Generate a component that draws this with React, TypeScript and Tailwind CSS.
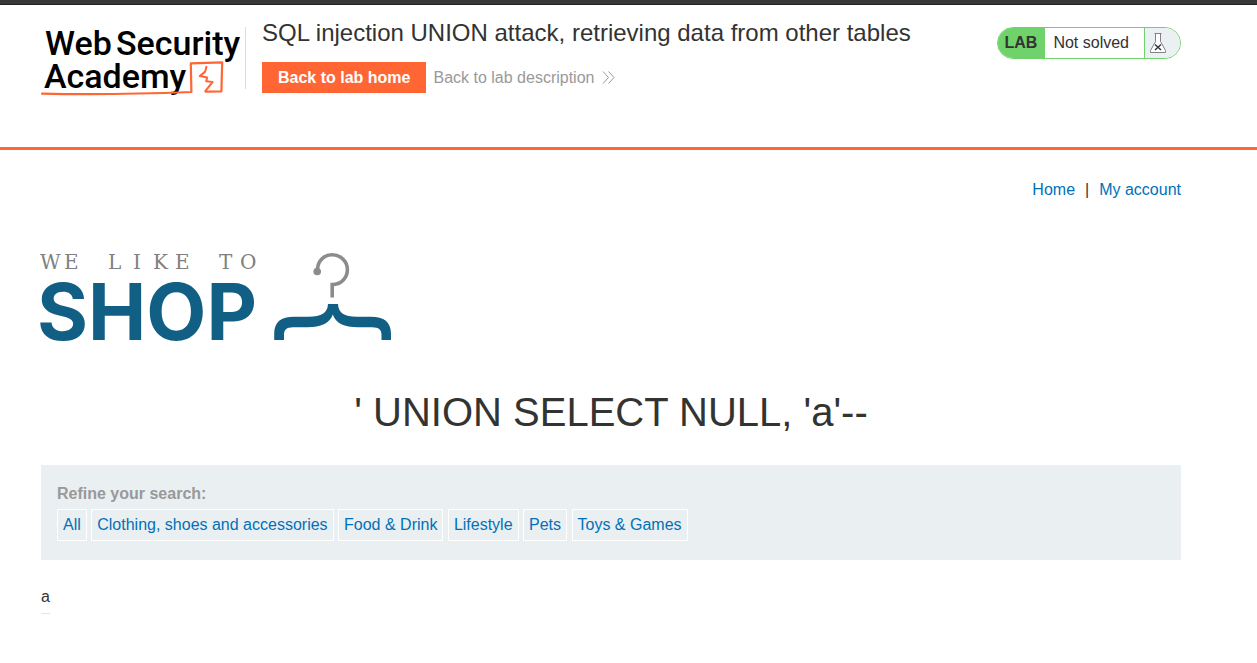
const categories = [
  'All',
  'Clothing, shoes and accessories',
  'Food & Drink',
  'Lifestyle',
  'Pets',
  'Toys & Games',
];

function AcademyLogo() {
  return (
    <svg
      width="205"
      height="80"
      viewBox="40 20 205 80"
      role="img"
      aria-label="Web Security Academy"
      className="shrink-0"
    >
      <g fill="#000" fontFamily="Roboto, sans-serif" fontSize="34" fontWeight="500">
        <text x="45" y="55">Web</text>
        <text x="116" y="55">Security</text>
        <text x="44" y="88">Academy</text>
      </g>
      <g fill="none" stroke="#ff6633" strokeLinejoin="round" strokeLinecap="round">
        <path d="M42 93.6 C90 94.8 140 94 191.4 92 L190.8 63.4 L222.2 62.4 L221.4 91.4 L205.5 91.6" strokeWidth="2.2" />
        <path d="M206.4 66.8 L205.2 71.6 L199.8 76 L207.2 77.4 L206.2 81.2 L212.6 82 L205.5 90.8" strokeWidth="2" />
      </g>
    </svg>
  );
}

function ShopLogo() {
  return (
    <svg width="356" height="120" viewBox="36 240 356 120" role="img" aria-label="We like to shop">
      <text
        x="40 64 86 108 133 153 175 197 219 240"
        y="269"
        fill="#808080"
        fontFamily="'DejaVu Serif', serif"
        fontSize="20"
      >
        WE LIKE TO
      </text>
      <text x="37" y="340" fill="#125f85" fontFamily="Inter, 'Liberation Sans', sans-serif" fontSize="78" fontWeight="700">
        SHOP
      </text>
      <path
        d="M317.5 271.5 C317 261 324 254.8 332 254.8 C341 254.8 347.4 261.8 347.4 269.6 C347.4 278 341 284.6 332.2 284.6 V297.5"
        fill="none"
        stroke="#8c8c8c"
        strokeWidth="3.6"
      />
      <circle cx="317.2" cy="271.5" r="3.8" fill="#8c8c8c" />
      <path
        d="M328 304 H338 C338.5 313 344 316.6 357 316.8 H371 C384 316.8 391 322 391 334 V340 H381.5 V335 C381.5 329.5 379 327.4 372 327.2 H358 C344 327.2 336 323.5 332.8 314.5 C329.5 323.5 321 327.2 307.5 327.2 H293 C286.5 327.4 284 329.5 284 335 V340 H274.2 V334 C274.2 322 281 316.8 294 316.8 H308.5 C321.5 316.6 327.5 313 328 304 Z"
        fill="#125f85"
      />
    </svg>
  );
}

function FlaskIcon() {
  return (
    <svg width="18" height="22" viewBox="0 0 18 22" fill="none" aria-hidden="true">
      <path d="M6.5 2 V9.5 L1.5 18.5 V20.5 H16.5 V18.5 L11.5 9.5 V2" fill="#fff" stroke="#7d8285" />
      <path d="M5.5 1.5 H12.5" stroke="#7d8285" strokeWidth="1.2" />
      <path d="M6 12.5 L12 18 M12 12.5 L6 18" stroke="#333" strokeWidth="1.4" />
    </svg>
  );
}

export default function App() {
  return (
    <div className="bg-white font-['Liberation_Sans',Arial,sans-serif] text-base leading-6 text-[#333332]">
      <div className="h-[5px] border-b border-[#222] bg-[#383838]" />
      <header className="h-[145px] border-b-3 border-[#ff6633] pt-[15px] pr-[76px] pl-[40px]">
        <div className="flex items-start">
          <AcademyLogo />
          <div className="mt-[7px] h-[62px] border-l border-[#dcdcdc]" />
          <div className="-mt-[3px] ml-4 flex-1">
            <h1 className="text-2xl leading-8">
              SQL injection UNION attack, retrieving data from other tables
            </h1>
            <div className="mt-[13px] flex items-center gap-[7px]">
              <a href="#home" className="bg-[#ff6633] px-4 py-1 leading-[23px] font-bold text-white">
                Back to lab home
              </a>
              <a href="#description" className="flex items-center gap-2 text-[#999]">
                Back to lab description
                <svg width="13" height="13" viewBox="0 0 13 13" fill="none" stroke="#999" aria-hidden="true">
                  <path d="M1 .5 L6.5 6.5 L1 12.5 M6.5 .5 L12 6.5 L6.5 12.5" />
                </svg>
              </a>
            </div>
          </div>
          <div className="mt-[7px] flex h-8 items-stretch overflow-hidden rounded-2xl border border-[#70d26b] leading-[30px]">
            <span className="bg-[#70d26b] px-[7px] pr-2 font-bold">LAB</span>
            <span className="px-2 pr-[15px]">Not solved</span>
            <span className="flex w-9 items-center border-l border-[#70d26b] bg-[#ebf0f3] pl-1">
              <FlaskIcon />
            </span>
          </div>
        </div>
      </header>

      <main className="pr-[76px] pb-12 pl-[41px]">
        <nav className="flex justify-end gap-[10px] pt-7 text-[#0071b9]">
          <a href="#home">Home</a>
          <span className="text-[#333332]">|</span>
          <a href="#account">My account</a>
        </nav>
        <div className="-ml-[5px] pt-[38px]">
          <ShopLogo />
        </div>
        <h2 className="mt-7 text-center text-[40px] leading-12">' UNION SELECT NULL, 'a'--</h2>
        <section className="mt-[29px] bg-[#eaeff2] px-4 pt-[17px] pb-[19px]">
          <p className="font-bold text-[#999]">Refine your search:</p>
          <div className="mt-[3px]">
            {categories.map((name) => (
              <span key={name}>
                <a
                  href="#filter"
                  className="inline-block border border-white px-[5px] align-top leading-[30px] text-[#0071b9]"
                >
                  {name}
                </a>{' '}
              </span>
            ))}
          </div>
        </section>
        <table className="mt-6 border-collapse">
          <tbody>
            <tr className="border-b border-[#e4e4e4]">
              <th className="pt-px pb-1 font-normal">a</th>
            </tr>
          </tbody>
        </table>
      </main>
    </div>
  );
}
